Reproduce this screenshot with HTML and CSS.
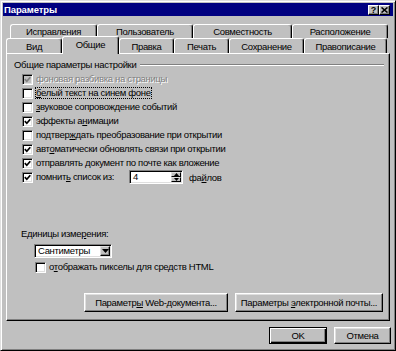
FILE: index.html
```html
<!DOCTYPE html>
<html lang="ru">
<head>
<meta charset="utf-8">
<title>Параметры</title>
<link rel="stylesheet" href="styles.css">
</head>
<body>
<div class="window">
  <div class="titlebar">
    <span class="title">Параметры</span>
    <span class="capbtns">
      <span class="capbtn q">?</span>
      <span class="capbtn x"><svg width="7" height="6" viewBox="0 0 7 6"><path d="M0.5 0.5 L6.5 5.5 M6.5 0.5 L0.5 5.5" stroke="#000" stroke-width="1.6" fill="none"/></svg></span>
    </span>
  </div>
  <div class="tabs">
    <div class="tabrow back">
      <div class="tab">Исправления</div>
      <div class="tab">Пользователь</div>
      <div class="tab">Совместность</div>
      <div class="tab">Расположение</div>
    </div>
    <div class="tabrow front">
      <div class="tab">Вид</div>
      <div class="tab selected">Общие</div>
      <div class="tab">Правка</div>
      <div class="tab">Печать</div>
      <div class="tab">Сохранение</div>
      <div class="tab">Правописание</div>
    </div>
  </div>
  <div class="panel">
    <div class="grouphead"><span>Общие параметры настройки</span><span class="etch"></span></div>
    <div class="checks">
      <div class="cb disabled"><span class="box checked"><svg viewBox="0 0 7 7" width="7" height="7"><path d="M0.8 3.2 L2.8 5.3 L6.3 1.2" stroke="#808080" stroke-width="1.7" fill="none"/></svg></span><span class="lbl">фоновая разбивка на страницы</span></div>
      <div class="cb"><span class="box"></span><span class="lbl focus"><u>б</u>елый текст на синем фоне</span></div>
      <div class="cb"><span class="box"></span><span class="lbl"><u>з</u>вуковое сопровождение событий</span></div>
      <div class="cb"><span class="box checked"><svg viewBox="0 0 7 7" width="7" height="7"><path d="M0.8 3.2 L2.8 5.3 L6.3 1.2" stroke="#000" stroke-width="1.7" fill="none"/></svg></span><span class="lbl">эффекты а<u>н</u>имации</span></div>
      <div class="cb"><span class="box"></span><span class="lbl">подтвер<u>ж</u>дать преобразование при открытии</span></div>
      <div class="cb"><span class="box checked"><svg viewBox="0 0 7 7" width="7" height="7"><path d="M0.8 3.2 L2.8 5.3 L6.3 1.2" stroke="#000" stroke-width="1.7" fill="none"/></svg></span><span class="lbl">авт<u>о</u>матически обновлять связи при открытии</span></div>
      <div class="cb"><span class="box checked"><svg viewBox="0 0 7 7" width="7" height="7"><path d="M0.8 3.2 L2.8 5.3 L6.3 1.2" stroke="#000" stroke-width="1.7" fill="none"/></svg></span><span class="lbl">отправлять <u>д</u>окумент по почте как вложение</span></div>
      <div class="cb"><span class="box checked"><svg viewBox="0 0 7 7" width="7" height="7"><path d="M0.8 3.2 L2.8 5.3 L6.3 1.2" stroke="#000" stroke-width="1.7" fill="none"/></svg></span><span class="lbl spinlbl">помнит<u>ь</u> список из:</span>
        <span class="spin"><span class="spinval">4</span><span class="spinbtns"><span class="sbtn"><svg width="5" height="3" viewBox="0 0 5 3"><path d="M2.5 0 L5 3 L0 3 Z" fill="#000"/></svg></span><span class="sbtn"><svg width="5" height="3" viewBox="0 0 5 3"><path d="M0 0 L5 0 L2.5 3 Z" fill="#000"/></svg></span></span></span>
        <span class="after">фа<u>й</u>лов</span>
      </div>
    </div>
    <div class="units">Единицы изме<u>р</u>ения:</div>
    <div class="combo"><span class="comboval">Сантиметры</span><span class="combobtn"><svg width="7" height="4" viewBox="0 0 7 4"><path d="M0 0 L7 0 L3.5 4 Z" fill="#000"/></svg></span></div>
    <div class="cb pixels"><span class="box"></span><span class="lbl">о<u>т</u>ображать пикселы для средств HTML</span></div>
    <div class="panelbtns">
      <div class="btn web"><span>Параметр<u>ы</u> Web-документа...</span></div>
      <div class="btn mail"><span>Параметры <u>э</u>лектронной почты...</span></div>
    </div>
  </div>
  <div class="footer">
    <div class="btn ok"><span>OK</span></div>
    <div class="btn cancel"><span>Отмена</span></div>
  </div>
</div>
</body>
</html>
```
FILE: styles.css
```css
* { box-sizing: border-box; }
html, body { margin: 0; padding: 0; }
body {
  width: 396px;
  height: 351px;
  background: #c0c0c0;
  font-family: "Liberation Sans", Arial, sans-serif;
  font-size: 9.5px;
  letter-spacing: -0.32px;
  color: #000;
  overflow: hidden;
}
u { text-decoration: underline; text-underline-offset: 1px; }

.window {
  width: 396px;
  height: 351px;
  background: #c0c0c0;
  border: 1px solid;
  border-color: #dfdfdf #000 #000 #dfdfdf;
  box-shadow: inset 1px 1px #fff, inset -1px -1px #808080;
  padding: 2px;
  display: flex;
  flex-direction: column;
}

.titlebar {
  height: 13px;
  background: #000080;
  color: #fff;
  display: flex;
  align-items: center;
  justify-content: space-between;
  padding: 0 3px 0 1px;
}
.title { font-weight: bold; font-size: 9.5px; letter-spacing: -0.1px; }
.capbtns { display: flex; }
.capbtn {
  width: 11px;
  height: 10px;
  background: #c0c0c0;
  border: 1px solid;
  border-color: #fff #000 #000 #fff;
  box-shadow: inset -1px -1px #808080;
  color: #000;
  font-weight: bold;
  font-size: 9px;
  line-height: 8px;
  letter-spacing: 0;
  display: flex;
  align-items: center;
  justify-content: center;
}

.tabs { margin-top: 8px; }
.tabrow { display: flex; }
.tabrow.back { height: 14px; padding-left: 7px; }
.tabrow.front { height: 15px; padding-left: 3px; }
.tab {
  height: 100%;
  border-top: 1px solid #fff;
  border-left: 1px solid #fff;
  border-right: 1px solid #000;
  box-shadow: inset -1px 0 #808080;
  border-radius: 3px 3px 0 0;
  background: #c0c0c0;
  display: flex;
  align-items: center;
  justify-content: center;
  white-space: nowrap;
}
.back .tab:nth-child(1) { width: 87px; }
.back .tab:nth-child(2) { width: 96px; }
.back .tab:nth-child(3) { width: 99px; }
.back .tab:nth-child(4) { width: 96px; }
.front .tab { padding-top: 1px; }
.front .tab:nth-child(1) { width: 56px; }
.front .tab:nth-child(2) { width: 57px; }
.front .tab:nth-child(3) { width: 55px; }
.front .tab:nth-child(4) { width: 55px; }
.front .tab:nth-child(5) { width: 75px; }
.front .tab:nth-child(6) { width: 83px; }
.tab.selected {
  height: 18px;
  margin-top: -2px;
  padding-top: 0;
  padding-bottom: 2px;
  position: relative;
  z-index: 2;
}

.panel {
  margin-left: 3px;
  width: 384px;
  height: 268px;
  border: 1px solid;
  border-color: #fff #000 #000 #fff;
  box-shadow: inset -1px -1px #808080;
  padding: 3px 0 0 7px;
  display: flex;
  flex-direction: column;
  align-items: flex-start;
}

.grouphead {
  height: 14px;
  width: 100%;
  display: flex;
  align-items: center;
}
.etch {
  flex: 1;
  height: 2px;
  border-top: 1px solid #808080;
  border-bottom: 1px solid #fff;
  margin: 1px 5px 0 4px;
}

.checks { margin-top: 1px; margin-left: 8px; }
.cb {
  height: 14px;
  display: flex;
  align-items: center;
  white-space: nowrap;
}
.box {
  width: 11px;
  height: 11px;
  flex: none;
  background: #fff;
  border: 1px solid;
  border-color: #808080 #fff #fff #808080;
  box-shadow: inset 1px 1px #000, inset -1px -1px #dfdfdf;
  display: flex;
  align-items: center;
  justify-content: center;
  margin-right: 2px;
}
.box svg { display: block; }
.disabled .box { background: #c0c0c0; }
.disabled .lbl { color: #808080; text-shadow: 1px 1px #fff; }
.lbl { line-height: 12px; padding: 0 1px; }
.focus { outline: 1px dotted #000; outline-offset: -1px; }

.spinlbl { width: 94px; }
.spin {
  width: 54px;
  height: 14px;
  background: #fff;
  border: 1px solid;
  border-color: #808080 #fff #fff #808080;
  box-shadow: inset 1px 1px #000, inset -1px -1px #dfdfdf;
  display: flex;
  padding: 1px;
}
.spinval { flex: 1; padding-left: 2px; line-height: 10px; }
.spinbtns { width: 10px; display: flex; flex-direction: column; }
.sbtn {
  flex: 1;
  background: #c0c0c0;
  border: 1px solid;
  border-color: #dfdfdf #000 #000 #dfdfdf;
  display: flex;
  align-items: center;
  justify-content: center;
}
.sbtn svg { display: block; }
.after { margin-left: 6px; }

.units { margin-top: 43px; margin-left: 7px; height: 14px; line-height: 14px; }
.combo {
  margin-top: 3px;
  margin-left: 20px;
  width: 78px;
  height: 14px;
  background: #fff;
  border: 1px solid;
  border-color: #808080 #fff #fff #808080;
  box-shadow: inset 1px 1px #000, inset -1px -1px #dfdfdf;
  display: flex;
  padding: 1px;
}
.comboval { flex: 1; padding-left: 2px; line-height: 10px; }
.combobtn {
  width: 10px;
  background: #c0c0c0;
  border: 1px solid;
  border-color: #dfdfdf #000 #000 #dfdfdf;
  box-shadow: inset -1px -1px #808080;
  display: flex;
  align-items: center;
  justify-content: center;
}
.pixels { margin-top: 2px; margin-left: 21px; }

.panelbtns {
  margin-top: 19px;
  align-self: stretch;
  display: flex;
  justify-content: flex-end;
  gap: 7px;
  padding-right: 6px;
}
.btn {
  height: 19px;
  background: #c0c0c0;
  border: 1px solid;
  border-color: #fff #000 #000 #fff;
  box-shadow: inset -1px -1px #808080, inset 1px 1px #dfdfdf;
  display: flex;
  align-items: center;
  justify-content: center;
  white-space: nowrap;
}
.btn.web { width: 144px; }
.btn.mail { width: 148px; }

.footer {
  margin-top: 6px;
  display: flex;
  justify-content: flex-end;
  gap: 7px;
  padding-right: 2px;
}
.footer .btn { height: 17px; }
.btn.ok {
  width: 58px;
  border: 1px solid #000;
  box-shadow: inset 1px 1px #fff, inset -1px -1px #000, inset -2px -2px #808080;
}
.btn.cancel { width: 57px; }
```
